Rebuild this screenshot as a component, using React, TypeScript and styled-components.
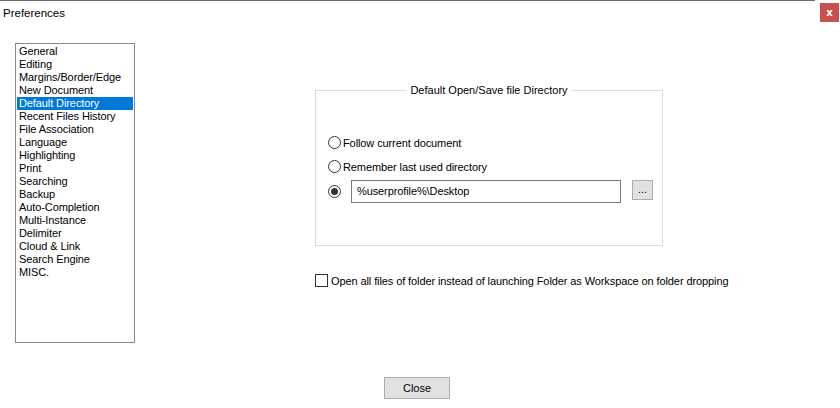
import React from "react";
import styled, { createGlobalStyle } from "styled-components";

const GlobalStyle = createGlobalStyle`
  html, body {
    margin: 0;
    padding: 0;
    background: #ffffff;
  }
  body {
    font-family: "Liberation Sans", Arial, sans-serif;
    font-size: 11px;
    color: #000;
  }
`;

const Window = styled.div`
  width: 840px;
  height: 408px;
  background: #fff;
  display: flex;
  flex-direction: column;
  overflow: hidden;
`;

/* Title bar with the dark line on top */
const TitleBar = styled.div`
  height: 22px;
  display: flex;
  align-items: flex-start;
  justify-content: space-between;
  border-top: 1px solid #6f6f6f;
  margin-right: 25px;
`;

const Title = styled.span`
  font-size: 11.5px;
  padding: 6px 0 0 3px;
  line-height: 13px;
`;

const CloseX = styled.button`
  width: 19px;
  height: 19px;
  margin: 2px -24px 0 0;
  border: none;
  padding: 0;
  background: #c75050;
  color: #fff;
  font-family: "DejaVu Sans", sans-serif;
  font-weight: bold;
  font-size: 10px;
  line-height: 17px;
`;

const Body = styled.div`
  display: flex;
  align-items: flex-start;
  padding: 20px 0 0 15px;
`;

/* Left category list */
const ListBox = styled.ul`
  width: 120px;
  height: 300px;
  box-sizing: border-box;
  border: 1px solid #828790;
  margin: 0;
  padding: 1px 1px 0 1px;
  list-style: none;
`;

const ListItem = styled.li<{ $selected?: boolean }>`
  height: 13px;
  line-height: 13px;
  padding-left: 2px;
  letter-spacing: -0.1px;
  white-space: nowrap;
  background: ${(p) => (p.$selected ? "#0078d7" : "transparent")};
  color: ${(p) => (p.$selected ? "#fff" : "#000")};
`;

const Panel = styled.div`
  display: flex;
  flex-direction: column;
  margin-left: 180px;
  padding-top: 41px;
`;

const GroupBox = styled.fieldset`
  width: 348px;
  height: 162px;
  box-sizing: border-box;
  margin: 0;
  padding: 0;
  border: 1px solid #dcdcdc;
  display: flex;
  flex-direction: column;
`;

const Legend = styled.legend`
  margin: 0 auto;
  padding: 0 4px;
  line-height: 13px;
`;

const OptionList = styled.div`
  display: flex;
  flex-direction: column;
  gap: 11px;
  padding: 39px 0 0 12px;
`;

const OptionRow = styled.label`
  display: flex;
  align-items: center;
  height: 13px;
  letter-spacing: -0.1px;
`;

const Radio = styled.span<{ $checked?: boolean }>`
  width: 13px;
  height: 13px;
  box-sizing: border-box;
  border: 1px solid #333;
  border-radius: 50%;
  display: flex;
  align-items: center;
  justify-content: center;
  margin-right: 2px;
  flex: none;

  &::after {
    content: "";
    width: 7px;
    height: 7px;
    border-radius: 50%;
    background: ${(p) => (p.$checked ? "#333" : "transparent")};
  }
`;

const PathRow = styled.div`
  display: flex;
  align-items: flex-start;
  height: 23px;
  margin-top: -4px;
`;

const RadioCell = styled.div`
  height: 23px;
  display: flex;
  align-items: center;
`;

const PathInput = styled.div`
  width: 270px;
  height: 23px;
  box-sizing: border-box;
  border: 1px solid #7a7a7a;
  margin-left: 8px;
  padding-left: 5px;
  line-height: 21px;
  letter-spacing: -0.1px;
`;

const SmallButton = styled.button`
  width: 21px;
  height: 20px;
  box-sizing: border-box;
  margin-left: 11px;
  padding: 0 0 3px 0;
  border: 1px solid #adadad;
  background: #e1e1e1;
  font-family: "Liberation Sans", Arial, sans-serif;
  font-size: 11px;
  color: #000;
`;

const CheckRow = styled.label`
  display: flex;
  align-items: center;
  margin-top: 28px;
  height: 13px;
  letter-spacing: -0.1px;
  white-space: nowrap;
`;

const CheckBox = styled.span`
  width: 13px;
  height: 13px;
  box-sizing: border-box;
  border: 1px solid #333;
  background: #fff;
  margin-right: 3px;
  flex: none;
`;

const Footer = styled.div`
  display: flex;
  padding: 34px 0 0 384px;
`;

const DialogButton = styled.button`
  width: 66px;
  height: 22px;
  box-sizing: border-box;
  border: 1px solid #adadad;
  background: #e1e1e1;
  font-family: "Liberation Sans", Arial, sans-serif;
  font-size: 11px;
  color: #000;
  padding: 0;
`;

const categories = [
  "General",
  "Editing",
  "Margins/Border/Edge",
  "New Document",
  "Default Directory",
  "Recent Files History",
  "File Association",
  "Language",
  "Highlighting",
  "Print",
  "Searching",
  "Backup",
  "Auto-Completion",
  "Multi-Instance",
  "Delimiter",
  "Cloud & Link",
  "Search Engine",
  "MISC.",
];

export default function App() {
  return (
    <>
      <GlobalStyle />
      <Window>
        <TitleBar>
          <Title>Preferences</Title>
          <CloseX>x</CloseX>
        </TitleBar>
        <Body>
          <ListBox>
            {categories.map((c) => (
              <ListItem key={c} $selected={c === "Default Directory"}>
                {c}
              </ListItem>
            ))}
          </ListBox>
          <Panel>
            <GroupBox>
              <Legend>Default Open/Save file Directory</Legend>
              <OptionList>
                <OptionRow>
                  <Radio />
                  Follow current document
                </OptionRow>
                <OptionRow>
                  <Radio />
                  Remember last used directory
                </OptionRow>
                <PathRow>
                  <RadioCell>
                    <Radio $checked />
                  </RadioCell>
                  <PathInput>%userprofile%\Desktop</PathInput>
                  <SmallButton>...</SmallButton>
                </PathRow>
              </OptionList>
            </GroupBox>
            <CheckRow>
              <CheckBox />
              Open all files of folder instead of launching Folder as Workspace on folder dropping
            </CheckRow>
          </Panel>
        </Body>
        <Footer>
          <DialogButton>Close</DialogButton>
        </Footer>
      </Window>
    </>
  );
}
